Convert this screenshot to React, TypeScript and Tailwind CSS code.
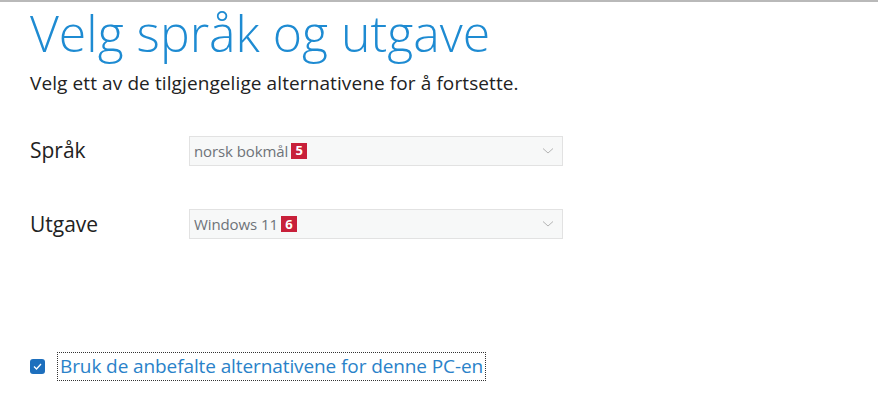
import React from "react";

const font = { fontFamily: '"Open Sans", "Noto Sans", sans-serif' };

const Badge = ({ n }: { n: string }) => (
  <span className="ml-[3px] inline-flex h-[16px] w-[16px] items-center justify-center bg-[#c8203a] text-[13px] font-bold leading-none text-white">
    {n}
  </span>
);

const SelectBox = ({ value, badge }: { value: string; badge: string }) => (
  <div className="flex h-[30px] w-[374px] items-center justify-between border border-[#e2e2e2] bg-[#f7f8f8] pl-[4px] pr-[8px]">
    <div className="flex items-center text-[15px] tracking-[-0.1px] text-[#6e7378]">
      <span>{value}</span>
      <Badge n={badge} />
    </div>
    <svg width="12" height="8" viewBox="0 0 12 8" fill="none">
      <path d="M1 1.5 L6 6 L11 1.5" stroke="#b4b4b4" strokeWidth="1" />
    </svg>
  </div>
);

export default function App() {
  return (
    <div
      className="h-[397px] w-[878px] overflow-hidden border-t-2 border-[#b9b9b9] bg-white"
      style={font}
    >
      <div className="pl-[30px]">
        <h1 className="text-[50px] font-light leading-[62px] text-[#1e8bd2]">
          Velg språk og utgave
        </h1>
        <p className="mt-[7px] text-[19px] leading-[24px] tracking-[0.1px] text-[#222]">
          Velg ett av de tilgjengelige alternativene for å fortsette.
        </p>

        <div className="mt-[40px] flex items-center">
          <span className="w-[159px] text-[21px] text-[#222]">Språk</span>
          <SelectBox value="norsk bokmål" badge="5" />
        </div>
        <div className="mt-[42px] flex items-center">
          <span className="w-[159px] text-[21px] text-[#222]">Utgave</span>
          <SelectBox value="Windows 11" badge="6" />
        </div>

        <div className="mt-[112px] flex items-center">
          <span className="flex h-[15px] w-[15px] items-center justify-center rounded-[3px] bg-[#1d6fbd]">
            <svg width="9" height="7" viewBox="0 0 9 7" fill="none">
              <path d="M1 3.5 L3.5 6 L8 1" stroke="white" strokeWidth="1.3" />
            </svg>
          </span>
          <span className="ml-[12px] border border-dotted border-[#333] px-[2px] text-[19px] leading-[27px] tracking-[-0.1px] text-[#2a82c9]">
            Bruk de anbefalte alternativene for denne PC-en
          </span>
        </div>
      </div>
    </div>
  );
}
